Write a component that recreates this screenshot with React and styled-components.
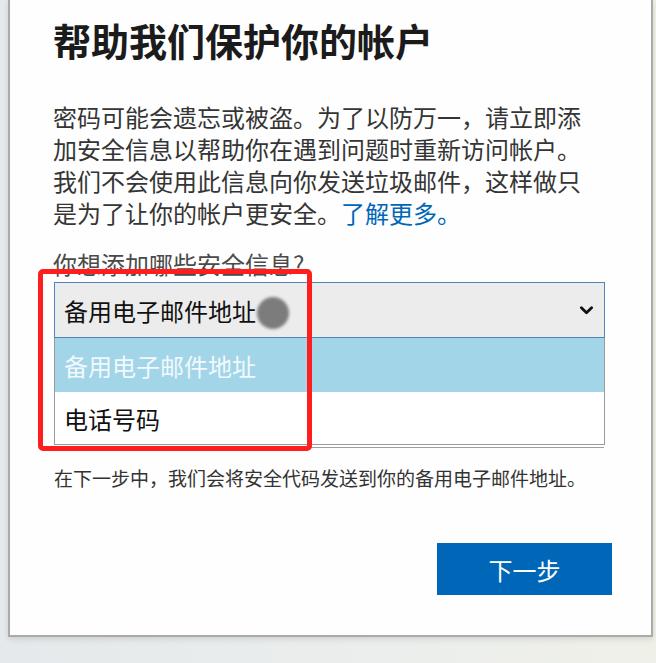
import React from "react";
import styled, { createGlobalStyle } from "styled-components";

const GlobalStyle = createGlobalStyle`
  html, body {
    margin: 0;
    padding: 0;
  }
  body {
    background: linear-gradient(90deg, #e5e9eb 0%, #eceeed 60%, #eff0e8 100%);
    font-family: "Noto Sans CJK SC", "Noto Sans", sans-serif;
    height: 663px;
    overflow: hidden;
  }
`;

const options = ["备用电子邮件地址", "电话号码"];

export default function App() {
  const selected = 0;
  return (
    <>
      <GlobalStyle />
      <Page>
        <Card>
          <Title>帮助我们保护你的帐户</Title>
          <Body>
            密码可能会遗忘或被盗。为了以防万一，请立即添加安全信息以帮助你在遇到问题时重新访问帐户。我们不会使用此信息向你发送垃圾邮件，这样做只是为了让你的帐户更安全。<Link>了解更多。</Link>
          </Body>
          <Label>你想添加哪些安全信息?</Label>
          <Select>
            <span>{options[selected]}</span>
            <Chevron viewBox="0 0 14 9">
              <polyline points="1.5,1.5 7,7 12.5,1.5" />
            </Chevron>
          </Select>
          <OptionList>
            {options.map((o, i) => (
              <Option key={o} $active={i === selected}>
                {o}
              </Option>
            ))}
          </OptionList>
          <Hint>在下一步中，我们会将安全代码发送到你的备用电子邮件地址。</Hint>
          <Actions>
            <NextButton>下一步</NextButton>
          </Actions>

          {/* annotation drawn over the screenshot */}
          <Highlight />
          <Cursor />
        </Card>
      </Page>
    </>
  );
}

const Page = styled.div`
  padding-left: 8px;
`;

const Card = styled.div`
  position: relative;
  box-sizing: border-box;
  width: 645px;
  background: #fefefe;
  border: 2px solid #a9abab;
  border-top: none;
  box-shadow: 0 2px 6px rgba(0, 0, 0, 0.12);
  padding: 16px 46px 40px 43px;
  display: flex;
  flex-direction: column;
`;

const Title = styled.h1`
  margin: 0;
  font-size: 38px;
  line-height: 48px;
  font-weight: 700;
  color: #1b1b1b;
`;

const Body = styled.p`
  margin: 37px 0 0;
  max-width: 540px;
  font-size: 24px;
  line-height: 32px;
  color: #353535;
`;

const Link = styled.a`
  color: #0067b8;
  cursor: pointer;
`;

const Label = styled.div`
  margin-top: 19px;
  font-size: 24px;
  line-height: 32px;
  color: #4a4a4a;
`;

const Select = styled.div`
  margin: 2px 0 0 1px;
  box-sizing: border-box;
  height: 56px;
  padding: 0 9px;
  display: flex;
  align-items: center;
  justify-content: space-between;
  background: #ececec;
  border: 1px solid #4f84bd;
  font-size: 24px;
  color: #111;
`;

const Chevron = styled.svg`
  width: 13px;
  height: 9px;
  margin-right: 2px;
  fill: none;
  stroke: #111;
  stroke-width: 3;
  stroke-linecap: round;
  stroke-linejoin: round;
`;

const OptionList = styled.div`
  margin-left: 1px;
  display: flex;
  flex-direction: column;
  border: 1px solid #9a9a9a;
  border-top: none;
  box-shadow: 0 3px 0 -1px #ffffff, 0 4px 0 -1px #a0a0a0;
`;

const Option = styled.div`
  height: ${(p) => (p.$active ? 54 : 52)}px;
  display: flex;
  align-items: center;
  padding: 0 9px;
  font-size: 24px;
  background: ${(p) => (p.$active ? "#a3d5e9" : "#ffffff")};
  color: ${(p) => (p.$active ? "#f2f9fc" : "#111")};
`;

const Hint = styled.p`
  margin: 19px 0 0 1px;
  font-size: 19px;
  line-height: 28px;
  color: #333;
`;

const Actions = styled.div`
  display: flex;
  justify-content: flex-end;
  margin: 51px -7px 0 0;
`;

const NextButton = styled.button`
  width: 175px;
  height: 52px;
  border: none;
  background: #0067b8;
  color: #fff;
  font-family: "Noto Sans CJK SC", sans-serif;
  font-size: 24px;
  cursor: pointer;
`;

const Highlight = styled.div`
  position: absolute;
  left: 28px;
  top: 269px;
  width: 274px;
  height: 182px;
  box-sizing: border-box;
  border: 5px solid #ff1e1e;
  border-radius: 5px;
  pointer-events: none;
`;

const Cursor = styled.div`
  position: absolute;
  left: 247px;
  top: 297px;
  width: 32px;
  height: 32px;
  border-radius: 50%;
  background: #7c7c7c;
  filter: blur(1.5px);
  pointer-events: none;
`;
